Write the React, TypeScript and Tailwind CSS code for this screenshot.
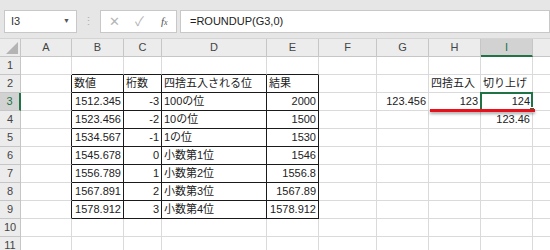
import React from "react"

const cols = [
  { l: "A", w: 51 },
  { l: "B", w: 52 },
  { l: "C", w: 38 },
  { l: "D", w: 105 },
  { l: "E", w: 52 },
  { l: "F", w: 58 },
  { l: "G", w: 52 },
  { l: "H", w: 52 },
  { l: "I", w: 52 },
  { l: "", w: 52 },
]

type Cell = { v: string; left?: boolean }

// rows 1..11, columns A..J
const data: Record<number, Record<number, Cell>> = {
  2: { 1: { v: "数値", left: true }, 2: { v: "桁数", left: true }, 3: { v: "四捨五入される位", left: true }, 4: { v: "結果", left: true }, 7: { v: "四捨五入", left: true }, 8: { v: "切り上げ", left: true } },
  3: { 1: { v: "1512.345" }, 2: { v: "-3" }, 3: { v: "100の位", left: true }, 4: { v: "2000" }, 6: { v: "123.456" }, 7: { v: "123" }, 8: { v: "124" } },
  4: { 1: { v: "1523.456" }, 2: { v: "-2" }, 3: { v: "10の位", left: true }, 4: { v: "1500" }, 8: { v: "123.46" } },
  5: { 1: { v: "1534.567" }, 2: { v: "-1" }, 3: { v: "1の位", left: true }, 4: { v: "1530" } },
  6: { 1: { v: "1545.678" }, 2: { v: "0" }, 3: { v: "小数第1位", left: true }, 4: { v: "1546" } },
  7: { 1: { v: "1556.789" }, 2: { v: "1" }, 3: { v: "小数第2位", left: true }, 4: { v: "1556.8" } },
  8: { 1: { v: "1567.891" }, 2: { v: "2" }, 3: { v: "小数第3位", left: true }, 4: { v: "1567.89" } },
  9: { 1: { v: "1578.912" }, 2: { v: "3" }, 3: { v: "小数第4位", left: true }, 4: { v: "1578.912" } },
}

const rows = [1, 2, 3, 4, 5, 6, 7, 8, 9, 10, 11]

function inTable(r: number, c: number) {
  return r >= 2 && r <= 9 && c >= 1 && c <= 4
}

function GridCell({ r, c }: { r: number; c: number }) {
  const cell = data[r]?.[c]
  const rightBlack = inTable(r, c) || (c === 0 && r >= 2 && r <= 9)
  const bottomBlack = inTable(r, c) || (r === 1 && c >= 1 && c <= 4)
  const selected = r === 3 && c === 8
  return (
    <div
      className={
        "relative flex h-[18px] items-center overflow-visible whitespace-nowrap border-r border-b bg-white text-[11px] text-[#222] " +
        (rightBlack ? "border-r-[#1a1a1a] " : "border-r-[#dadada] ") +
        (bottomBlack ? "border-b-[#1a1a1a] " : "border-b-[#dadada] ") +
        (cell?.left ? "justify-start pl-[2px]" : "justify-end pr-[2px]")
      }
    >
      {cell && <span className="relative z-10">{cell.v}</span>}
      {selected && (
        <div className="absolute -left-[1px] -top-[1px] z-20 h-[19px] w-[53px] border-2 border-[#217346]">
          <div className="absolute -bottom-[4px] -right-[4px] h-[6px] w-[6px] border border-white bg-[#217346]" />
        </div>
      )}
      {r === 3 && c === 7 && (
        <div className="absolute left-[1px] top-[16px] z-30 h-[3px] w-[105px] bg-[#e8101a] shadow-[0_2px_3px_rgba(0,0,0,0.35)]" />
      )}
    </div>
  )
}

export default function App() {
  return (
    <div className="h-[250px] w-[550px] overflow-hidden bg-white font-['Liberation_Sans','Noto_Sans_CJK_JP',sans-serif]">
      {/* formula bar */}
      <div className="flex h-[39px] items-start gap-0 border-b border-[#d4d4d4] bg-[#e6e6e6] pt-[10px]">
        <div className="ml-[4px] flex h-[23px] w-[73px] items-center justify-between border border-[#c8c8c8] bg-white px-[6px] text-[11px] text-[#333]">
          <span>I3</span>
          <span className="text-[7px] text-[#555]">▼</span>
        </div>
        <div className="flex h-[23px] w-[23px] items-center justify-center text-[11px] text-[#b0b0b0]">⋮</div>
        <div className="flex h-[23px] w-[77px] items-center border border-[#c8c8c8] bg-white pl-[8px] text-[13px] text-[#b5b5b5]">
          <span className="w-[26px]">✕</span>
          <span className="w-[26px]">✓</span>
          <span className="font-['Liberation_Serif',serif] text-[11px] italic text-[#555]">
            f<span className="text-[8px]">x</span>
          </span>
        </div>
        <div className="ml-[3px] flex h-[23px] flex-1 items-center border border-[#c8c8c8] bg-white pl-[9px] text-[11px] text-[#222]">
          =ROUNDUP(G3,0)
        </div>
      </div>

      <div className="grid grid-cols-[21px_51px_52px_38px_105px_52px_58px_52px_52px_52px_52px]">
        {/* column headers */}
        <div className="relative h-[18px] border-r border-b border-[#c6c6c6] bg-[#ececec]">
          <div className="absolute bottom-[2px] right-[2px] h-0 w-0 border-b-[12px] border-l-[12px] border-b-[#b4b4b4] border-l-transparent" />
        </div>
        {cols.map((col, i) =>
          col.l === "I" ? (
            <div key={i} className="flex h-[18px] items-center justify-center border-r border-b-2 border-r-[#c6c6c6] border-b-[#217346] bg-[#d2d2d2] text-[11px] text-[#217346]">
              {col.l}
            </div>
          ) : (
            <div key={i} className="flex h-[18px] items-center justify-center border-r border-b border-[#c6c6c6] bg-[#ececec] text-[11px] text-[#444]">
              {col.l}
            </div>
          )
        )}

        {rows.map((r) => (
          <React.Fragment key={r}>
            {r === 3 ? (
              <div className="flex h-[18px] items-center justify-center border-b border-r-2 border-b-[#c6c6c6] border-r-[#217346] bg-[#d2d2d2] text-[11px] text-[#217346]">
                {r}
              </div>
            ) : (
              <div className="flex h-[18px] items-center justify-center border-r border-b border-[#c6c6c6] bg-[#ececec] text-[11px] text-[#444]">
                {r}
              </div>
            )}
            {cols.map((_, c) => (
              <GridCell key={c} r={r} c={c} />
            ))}
          </React.Fragment>
        ))}
      </div>
    </div>
  )
}
